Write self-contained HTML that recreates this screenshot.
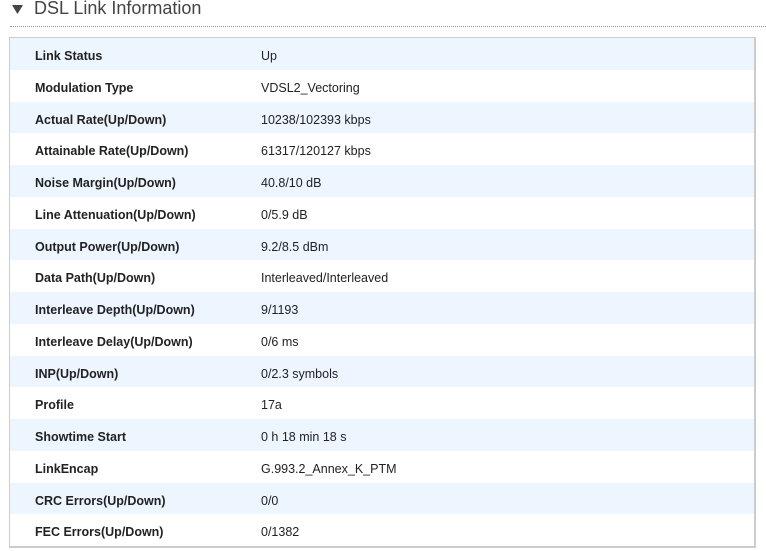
<!DOCTYPE html>
<html><head><style>
body{margin:0;background:#fff;font-family:"Liberation Sans",sans-serif;color:#333;width:766px;height:551px;overflow:hidden;position:relative}
.tri{position:absolute;left:12px;top:4px}
.title{position:absolute;left:34px;top:-2px;font-size:18px;color:#444}
.dot{position:absolute;left:10px;right:0;top:26px;border-top:1px dotted #999}
.box{position:absolute;left:9px;top:37px;width:744px;height:508px;border:1px solid #ccc;border-bottom:2px solid #ccc;border-right:2px solid #ccc;box-sizing:content-box}
.row{height:31.75px;line-height:37px;font-size:12.5px;position:relative}
.row:nth-child(odd){background:#edf6fe}
.l{position:absolute;left:25px;font-weight:bold;color:#222}
.v{position:absolute;left:251px;color:#222}
</style></head><body>
<svg class="tri" width="11" height="10" viewBox="0 0 11 10"><path d="M0 1 L11 1 L5.5 10 Z" fill="#444"/></svg>
<div class="title">DSL Link Information</div>
<div class="dot"></div>
<div class="box">
<div class="row"><span class="l">Link Status</span><span class="v">Up</span></div>
<div class="row"><span class="l">Modulation Type</span><span class="v">VDSL2_Vectoring</span></div>
<div class="row"><span class="l">Actual Rate(Up/Down)</span><span class="v">10238/102393 kbps</span></div>
<div class="row"><span class="l">Attainable Rate(Up/Down)</span><span class="v">61317/120127 kbps</span></div>
<div class="row"><span class="l">Noise Margin(Up/Down)</span><span class="v">40.8/10 dB</span></div>
<div class="row"><span class="l">Line Attenuation(Up/Down)</span><span class="v">0/5.9 dB</span></div>
<div class="row"><span class="l">Output Power(Up/Down)</span><span class="v">9.2/8.5 dBm</span></div>
<div class="row"><span class="l">Data Path(Up/Down)</span><span class="v">Interleaved/Interleaved</span></div>
<div class="row"><span class="l">Interleave Depth(Up/Down)</span><span class="v">9/1193</span></div>
<div class="row"><span class="l">Interleave Delay(Up/Down)</span><span class="v">0/6 ms</span></div>
<div class="row"><span class="l">INP(Up/Down)</span><span class="v">0/2.3 symbols</span></div>
<div class="row"><span class="l">Profile</span><span class="v">17a</span></div>
<div class="row"><span class="l">Showtime Start</span><span class="v">0 h 18 min 18 s</span></div>
<div class="row"><span class="l">LinkEncap</span><span class="v">G.993.2_Annex_K_PTM</span></div>
<div class="row"><span class="l">CRC Errors(Up/Down)</span><span class="v">0/0</span></div>
<div class="row"><span class="l">FEC Errors(Up/Down)</span><span class="v">0/1382</span></div>
</div>
</body></html>
